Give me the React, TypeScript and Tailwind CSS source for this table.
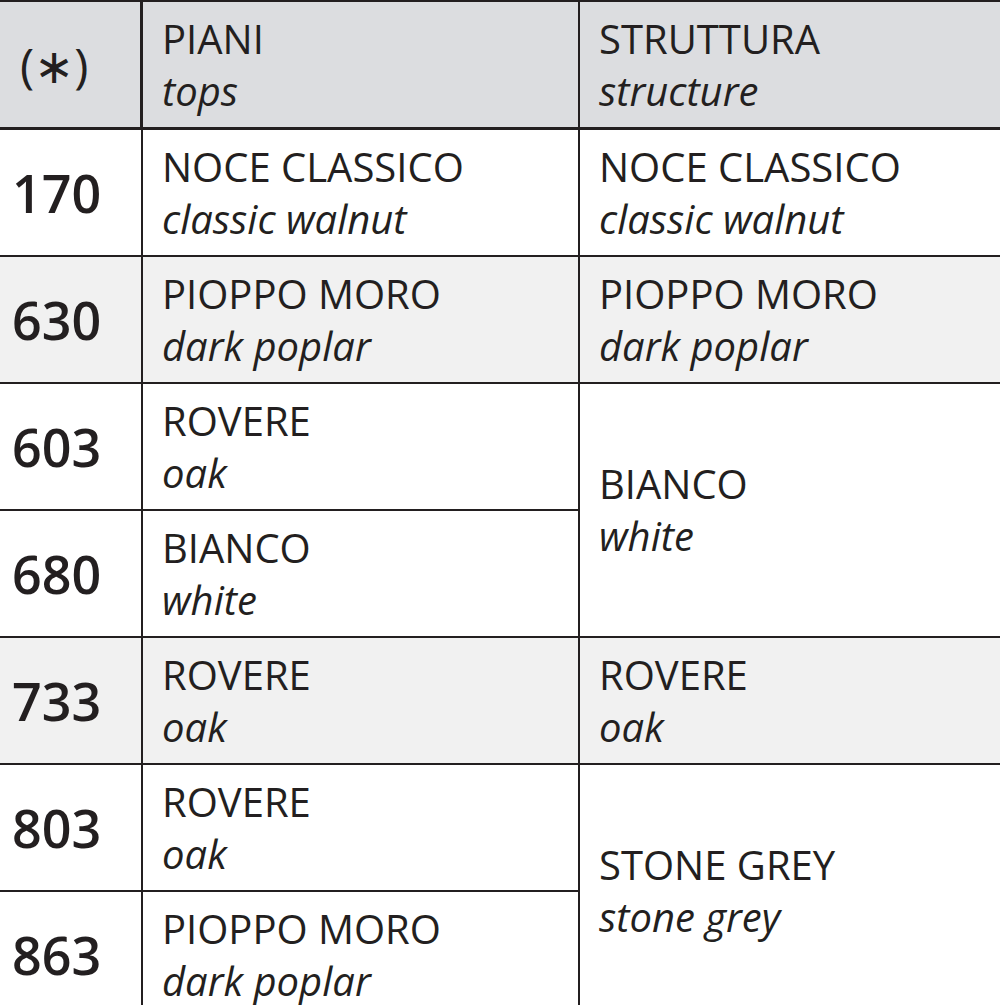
const FONT = "font-['Open_Sans','Noto_Sans',sans-serif]";

type Cell = { main: string; sub: string };

function Text({ cell }: { cell: Cell }) {
  return (
    <>
      <div className="text-[40px] leading-[52px] font-medium">{cell.main}</div>
      <div className="text-[40px] leading-[52px] italic">{cell.sub}</div>
    </>
  );
}

const rows: {
  code: string;
  top: Cell;
  structure?: Cell;
  span?: boolean;
  grey?: boolean;
}[] = [
  { code: "170", top: { main: "NOCE CLASSICO", sub: "classic walnut" }, structure: { main: "NOCE CLASSICO", sub: "classic walnut" } },
  { code: "630", top: { main: "PIOPPO MORO", sub: "dark poplar" }, structure: { main: "PIOPPO MORO", sub: "dark poplar" }, grey: true },
  { code: "603", top: { main: "ROVERE", sub: "oak" }, structure: { main: "BIANCO", sub: "white" }, span: true },
  { code: "680", top: { main: "BIANCO", sub: "white" } },
  { code: "733", top: { main: "ROVERE", sub: "oak" }, structure: { main: "ROVERE", sub: "oak" }, grey: true },
  { code: "803", top: { main: "ROVERE", sub: "oak" }, structure: { main: "STONE GREY", sub: "stone grey" }, span: true },
  { code: "863", top: { main: "PIOPPO MORO", sub: "dark poplar" } },
];

export default function App() {
  return (
    <div className={`w-[1000px] h-[1005px] overflow-hidden bg-white text-[#231f20] ${FONT}`}>
      <div className="border-t-2 border-[#231f20] grid grid-cols-[143px_437px_1fr] grid-rows-[128px_repeat(7,127px)]">
        {/* header */}
        <div className="bg-[#dcdde0] border-b-[3px] border-r-[3px] border-[#231f20] flex items-center pl-[20px] text-[48px] font-medium">
          (∗)
        </div>
        <div className="bg-[#dcdde0] border-b-[3px] border-r-2 border-[#231f20] flex flex-col justify-center pl-[19px]">
          <Text cell={{ main: "PIANI", sub: "tops" }} />
        </div>
        <div className="bg-[#dcdde0] border-b-[3px] border-[#231f20] flex flex-col justify-center pl-[19px]">
          <Text cell={{ main: "STRUTTURA", sub: "structure" }} />
        </div>

        {rows.map((r) => {
          const bg = r.grey ? "bg-[#f1f1f1]" : "bg-white";
          return (
            <div key={r.code} className="contents">
              <div className={`${bg} border-b-2 border-r-2 border-[#231f20] flex items-center pl-[12px] text-[52px] font-semibold`}>
                {r.code}
              </div>
              <div className={`${bg} border-b-2 border-r-2 border-[#231f20] flex flex-col justify-center pl-[19px]`}>
                <Text cell={r.top} />
              </div>
              {r.structure && (
                <div
                  className={`${bg} border-b-2 border-[#231f20] flex flex-col justify-center pl-[19px] ${r.span ? "row-span-2" : ""}`}
                >
                  <Text cell={r.structure} />
                </div>
              )}
            </div>
          );
        })}
      </div>
    </div>
  );
}
